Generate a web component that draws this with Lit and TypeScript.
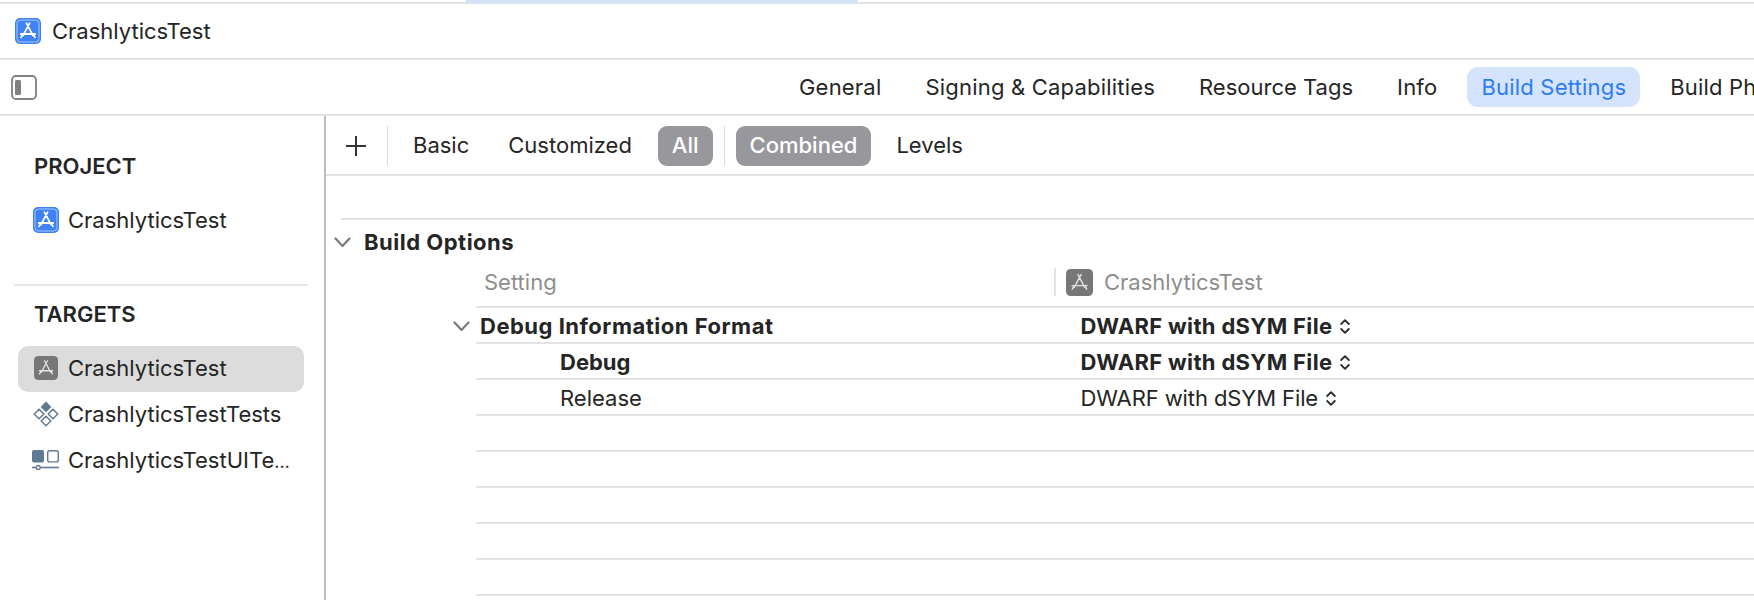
import { LitElement, html, css, svg } from "lit";
import { customElement } from "lit/decorators.js";

const aGlyph = (c: string, w: number) => svg`
  <path d="M11.4 5.2 L18 17.6 M14.6 5.2 L8 17.6 M5.8 16 H20.2 M6 19.4 L7.2 17.4 M20 19.4 L18.8 17.4" fill="none" stroke="${c}" stroke-width="${w}" stroke-linecap="round"/>`;

const blueIcon = html`<svg class="ic" width="26" height="26" viewBox="0 0 26 26">
  <rect x="0" y="0" width="26" height="26" rx="5" fill="#3f82f6"/>
  <rect x="2" y="2" width="22" height="22" rx="3.5" fill="#3f82f6" stroke="#a8c8fb" stroke-width="1"/>
  ${aGlyph("#ffffff", 1.8)}
</svg>`;

const greyIcon = (s: number) => html`<svg class="ic" width="${s}" height="${s}" viewBox="0 0 26 26">
  <rect x="0" y="0" width="26" height="26" rx="4.5" fill="#777777"/>
  ${aGlyph("#e4e4e4", 1.4)}
</svg>`;

const testsIcon = html`<svg class="ic" width="26" height="26" viewBox="0 0 26 26">
  <path d="M13 0.5 L18.4 5.9 L13 11.3 L7.6 5.9 Z" fill="#5f7a93"/>
  <path d="M6 8.2 L10.8 13 L6 17.8 L1.2 13 Z M20 8.2 L24.8 13 L20 17.8 L15.2 13 Z M13 15.2 L17.8 20 L13 24.8 L8.2 20 Z" fill="none" stroke="#5f7a93" stroke-width="1.4"/>
</svg>`;

const uiIcon = html`<svg class="ic" width="27" height="20" viewBox="0 0 27 20">
  <rect x="0" y="0" width="12" height="12.5" rx="2" fill="#5f7a93"/>
  <rect x="15.7" y="0.7" width="10.6" height="11.2" rx="2" fill="none" stroke="#5f7a93" stroke-width="1.4"/>
  <path d="M0 17.5 H27" stroke="#5f7a93" stroke-width="1.6"/>
  <circle cx="6.2" cy="17.5" r="2" fill="#fff" stroke="#5f7a93" stroke-width="1.3"/>
</svg>`;

const chevron = html`<svg class="chev" width="17" height="11" viewBox="0 0 17 11">
  <path d="M1.5 1.5 L8.5 9 L15.5 1.5" fill="none" stroke="#7a7a7a" stroke-width="2.2" stroke-linecap="round" stroke-linejoin="round"/>
</svg>`;

const updown = html`<svg class="updown" width="10" height="15" viewBox="0 0 10 15">
  <path d="M1.2 5 L5 1.2 L8.8 5 M1.2 10 L5 13.8 L8.8 10" fill="none" stroke="#2c2c2c" stroke-width="1.8" stroke-linecap="round" stroke-linejoin="round"/>
</svg>`;

@customElement("app-root")
export class AppRoot extends LitElement {
  static styles = css`
    :host {
      display: block;
      width: 1754px;
      height: 600px;
      overflow: hidden;
      background: #fff;
      font-family: Inter, "Liberation Sans", sans-serif;
      font-size: 22px;
      color: #252525;
    }
    .ic { flex: none; display: block; }
    .strip { height: 2px; display: flex; }
    .strip i { display: block; position: relative; width: 392px; height: 4px; margin-left: 466px; background: #d6e4f8; }
    .bar { border-top: 2px solid #e3e3e3; display: flex; align-items: center; }
    .title { height: 54px; padding-left: 15px; gap: 11px; }
    .tabs { height: 54px; border-bottom: 2px solid #e3e3e3; }
    .sbtn { flex: none; margin-left: 11px; width: 26px; height: 25px; }
    .tablist { display: flex; margin-left: 748px; gap: 16px; align-items: center; white-space: nowrap; letter-spacing: 0.2px; }
    .tab { height: 40px; padding: 0 14px; line-height: 40px; border-radius: 11px; flex: none; }
    .tab:nth-child(3) { letter-spacing: 0; }
    .tab.on { background: #d3e4fc; color: #2f7bf5; }
    .main { display: flex; height: 484px; }
    .side { width: 324px; flex: none; border-right: 2px solid #bdbdbd; }
    .sec { height: 36px; line-height: 36px; padding-left: 34px; font-weight: 600; }
    .sec.p { margin-top: 32px; }
    .sec.t { margin-top: 10px; }
    .rule { height: 2px; margin: 41px 16px 0 14px; background: #e6e6e6; }
    .item { box-sizing: border-box; height: 46px; margin: 0 20px 0 18px; padding: 0 0 2px 15px; display: flex; align-items: center; border-radius: 10px; }
    .item .ic { margin-right: 9px; }
    .item span { min-width: 0; white-space: nowrap; }
    .item em { font-style: normal; font-size: 18px; }
    .item.sel { background: #dcdcdc; margin-top: 14px; }
    .item.first { margin-top: 13px; padding-bottom: 0; }
    .item.sel .ic { margin-left: 1px; margin-right: 10px; }
    .item.ui { padding-left: 14px; }
    .content { flex: 1; min-width: 0; }
    .tools { height: 56px; padding-top: 2px; border-bottom: 2px solid #e3e3e3; display: flex; align-items: center; gap: 11px; }
    .plus { margin-left: 19px; width: 22px; height: 22px; flex: none; }
    .sep { width: 1px; height: 40px; background: #dcdcdc; flex: none; }
    .plus + .sep { margin-left: 9px; }
    .seg { height: 40px; line-height: 38px; padding: 0 14px; border-radius: 9px; flex: none; }
    .seg.on { background: #98989c; color: #fff; font-weight: 500; }
    .seg + .seg.on { margin-left: 1px; }
    .scroll { height: 42px; border-bottom: 2px solid #e3e3e3; margin-left: 15px; }
    .group { box-sizing: border-box; height: 46px; padding: 0 0 2px 8px; display: flex; align-items: center; gap: 13px; font-weight: 700; letter-spacing: 0.5px; }
    .table { margin-left: 150px; }
    .row { height: 32px; padding-top: 2px; border-bottom: 2px solid #e3e3e3; display: grid; grid-template-columns: 604.5px 1fr; align-items: center; position: relative; }
    .row.head { padding: 0 0 8px; color: #8e8e8e; }
    .row.b { font-weight: 700; }
    .name { padding-left: 84px; }
    .name.top { padding-left: 4px; letter-spacing: 0.5px; }
    .name.h { padding-left: 8px; }
    .row .chev { position: absolute; left: -23px; top: 13px; }
    .val { display: flex; align-items: center; gap: 8px; white-space: nowrap; letter-spacing: -0.1px; }
    .row.b .val { letter-spacing: 0.33px; }
    .hcell { display: flex; align-items: center; margin-left: -26.5px; }
    .hcell b { display: block; width: 2px; height: 28px; background: #e3e3e3; margin-right: 10px; }
    .hcell .ic { margin-right: 11px; }
  `;

  render() {
    const tabs = ["General", "Signing & Capabilities", "Resource Tags", "Info", "Build Settings", "Build Phases"];
    const emptyRows = [0, 1, 2, 3, 4];
    return html`
      <div class="strip"><i></i></div>
      <div class="bar title">${blueIcon}<span>CrashlyticsTest</span></div>
      <div class="bar tabs">
        <svg class="sbtn" viewBox="0 0 26 25">
          <rect x="1" y="1" width="24" height="23" rx="4" fill="none" stroke="#808080" stroke-width="1.8"/>
          <rect x="4" y="5" width="6" height="15" rx="1.5" fill="#808080"/>
        </svg>
        <div class="tablist">
          ${tabs.map((t, i) => html`<div class="tab ${i === 4 ? "on" : ""}">${t}</div>`)}
        </div>
      </div>
      <div class="main">
        <div class="side">
          <div class="sec p">PROJECT</div>
          <div class="item first">${blueIcon}<span>CrashlyticsTest</span></div>
          <div class="rule"></div>
          <div class="sec t">TARGETS</div>
          <div class="item sel">${greyIcon(24)}<span>CrashlyticsTest</span></div>
          <div class="item">${testsIcon}<span>CrashlyticsTestTests</span></div>
          <div class="item ui">${uiIcon}<span>CrashlyticsTestUITe<em>…</em></span></div>
        </div>
        <div class="content">
          <div class="tools">
            <svg class="plus" viewBox="0 0 22 22"><path d="M11 1 V21 M1 11 H21" stroke="#333" stroke-width="2"/></svg>
            <div class="sep"></div>
            <div class="seg">Basic</div>
            <div class="seg">Customized</div>
            <div class="seg on">All</div>
            <div class="sep"></div>
            <div class="seg on">Combined</div>
            <div class="seg">Levels</div>
          </div>
          <div class="scroll"></div>
          <div class="group">${chevron}<span>Build Options</span></div>
          <div class="table">
            <div class="row head">
              <div class="name h">Setting</div>
              <div class="hcell"><b></b>${greyIcon(27)}<span>CrashlyticsTest</span></div>
            </div>
            <div class="row b">${chevron}
              <div class="name top">Debug Information Format</div>
              <div class="val">DWARF with dSYM File ${updown}</div>
            </div>
            <div class="row b">
              <div class="name">Debug</div>
              <div class="val">DWARF with dSYM File ${updown}</div>
            </div>
            <div class="row">
              <div class="name">Release</div>
              <div class="val">DWARF with dSYM File ${updown}</div>
            </div>
            ${emptyRows.map(() => html`<div class="row"></div>`)}
          </div>
        </div>
      </div>
    `;
  }
}
